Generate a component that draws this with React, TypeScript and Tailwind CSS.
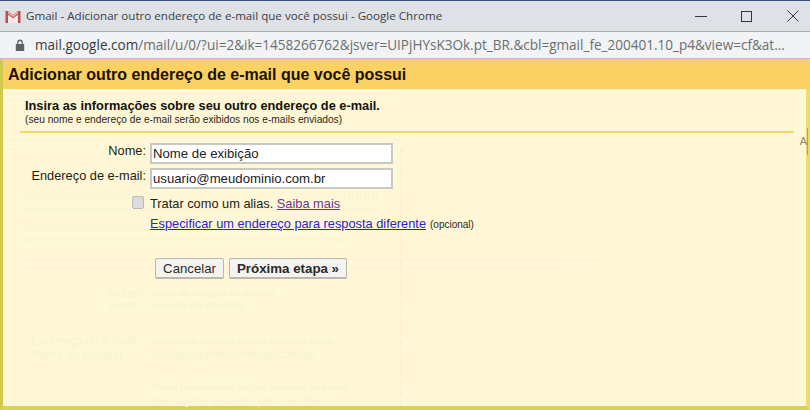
const sans = "font-['Liberation_Sans',Arial,sans-serif]"

function GmailIcon() {
  return (
    <svg width="16" height="13" viewBox="0 0 16 13">
      <path d="M0.5 1 H3 L8 5 L13 1 H15.5 V13 H12.8 V5 L8 8.6 L3.2 5 V13 H0.5 Z" fill="#b9504a" />
      <path d="M3 1 L8 5 L13 1 V3.4 L8 7.2 L3 3.4 Z" fill="#e0b0a8" />
      <path d="M3.2 5 L8 8.6 L12.8 5 V13 H3.2 Z" fill="#f7e9ea" />
    </svg>
  )
}

type GhostRow = { x: number; y: number; text: string; size?: number }

// texto apagado da pagina de tras, coordenadas relativas ao painel
const ghosts: GhostRow[] = [
  { x: 105, y: 198, text: "Nome:", size: 12 },
  { x: 148, y: 199, text: "Nome de exibição do usuário", size: 9.5 },
  { x: 105, y: 211, text: "E-mail:", size: 9.5 },
  { x: 148, y: 211, text: "usuario do domínio", size: 11 },
  { x: 28, y: 246, text: "Endereço de e-mail", size: 12 },
  { x: 148, y: 247, text: "Enviar pelo servidor do seu provedor agora", size: 9.5 },
  { x: 28, y: 260, text: "Nome de usuário", size: 12 },
  { x: 148, y: 260, text: "usuario@meudominio.com.br", size: 12.5 },
  { x: 148, y: 293, text: "Enviar pelo servidor do seu provedor de e-mail", size: 9.5 },
  { x: 148, y: 307, text: "mensagens enviadas pelo servidor", size: 11 },
]

// faixas pontilhadas para o que fica atras do formulario
const strips = [
  { x: 4, y: 4, w: 380, h: 8 },
  { x: 4, y: 50, w: 100, h: 11 },
  { x: 392, y: 50, w: 10, h: 11 },
  { x: 21, y: 105, w: 105, h: 5 },
  { x: 340, y: 105, w: 35, h: 5 },
  { x: 21, y: 118, w: 355, h: 5 },
  { x: 21, y: 136, w: 125, h: 5 },
  { x: 21, y: 149, w: 320, h: 5 },
]

export default function App() {
  return (
    <div className={`w-[810px] h-[410px] overflow-hidden flex flex-col bg-[#fff7d6] ${sans}`}>
      {/* janela do chrome */}
      <div className="h-[32px] shrink-0 flex items-center bg-[#dee1e6] border-t-[1px] border-t-[#34557c] border-b border-b-[#a9abae] pl-[5px]">
        <GmailIcon />
        <span className="ml-[5px] text-[11.6px] text-[#3c3f43] font-['Open_Sans',sans-serif] whitespace-nowrap">
          Gmail - Adicionar outro endereço de e-mail que você possui - Google Chrome
        </span>
        <div className="ml-auto flex items-center text-[#33363a]">
          <div className="w-[12px] h-px bg-[#33363a] mr-[34px]" />
          <div className="w-[11px] h-[11px] border border-[#33363a] mr-[35px]" />
          <svg width="12" height="12" viewBox="0 0 12 12" className="mr-[11px]">
            <path d="M0.5 0.5 L11.5 11.5 M11.5 0.5 L0.5 11.5" stroke="#33363a" strokeWidth="1" />
          </svg>
        </div>
      </div>
      <div className="h-[27px] shrink-0 flex items-center bg-[#f1f3f4] border-b border-b-[#eaa9c8] pl-[15px]">
        <svg width="10" height="12" viewBox="0 0 10 12">
          <path d="M2.2 5 V3.4 a2.8 2.8 0 0 1 5.6 0 V5 H9.2 V12 H0.8 V5 Z M3.5 5 H6.5 V3.4 a1.5 1.5 0 0 0 -3 0 Z" fill="#5f6368" fillRule="evenodd" />
        </svg>
        <span className="ml-[10px] text-[13.55px] text-[#6b6e72] font-['Open_Sans',sans-serif] whitespace-nowrap">
          <span className="text-[#3a3c40]">mail.google.com</span>/mail/u/0/?ui=2&amp;ik=1458266762&amp;jsver=UIPjHYsK3Ok.pt_BR.&amp;cbl=gmail_fe_200401.10_p4&amp;view=cf&amp;at...
        </span>
      </div>

      {/* dialogo */}
      <div className="flex-1 min-h-0 flex flex-col border-l-[3px] border-l-[#d3c94f] border-r-[4px] border-r-[#f0dc6c] border-b-[4px] border-b-[#d8d24f] border-t border-t-[#e9d35c]">
        <div className="h-[29px] shrink-0 bg-[#fad163] flex items-center pl-[5px] text-[16px] font-bold text-[#201000] -mr-[4px]">
          Adicionar outro endereço de e-mail que você possui
        </div>
        <div className="relative flex-1 min-h-0 bg-[#fff7d6] pl-[22px] pr-[12px]">
          {strips.map((s, i) => (
            <div
              key={i}
              className="absolute border-y-2 border-dotted border-[#f9f3d6]"
              style={{ left: s.x, top: s.y, width: s.w, height: s.h }}
            />
          ))}
          {ghosts.map((g, i) => (
            <span
              key={i}
              className="absolute whitespace-nowrap leading-none text-[#f9f2d3]"
              style={{ left: g.x, top: g.y, fontSize: g.size ?? 10 }}
            >
              {g.text}
            </span>
          ))}
          <div className="absolute left-[397px] top-[60px] bottom-0 border-l-2 border-dashed border-[#fdeedd]" />
          <div className="absolute left-[14px] right-[200px] top-[170px] h-px bg-[#fbf1d4]" />
          <div className="absolute left-[14px] right-[240px] top-[178px] h-px bg-[#fbf1d4]" />
          <div className="relative pt-[9px]">
            <p className="text-[12.8px] leading-[15px] font-bold text-[#14120a]">Insira as informações sobre seu outro endereço de e-mail.</p>
            <p className="text-[10.2px] leading-[12px] text-[#2a2618] mt-[1px] whitespace-nowrap">(seu nome e endereço de e-mail serão exibidos nos e-mails enviados)</p>
            <div className="h-[2px] bg-[#eedb68] mt-[5px] -ml-[5px]" />
          </div>
          <div className="relative mt-[10px] -ml-[22px] grid grid-cols-[143px_1fr] gap-x-[4px] text-[12.8px] text-[#1f1d14]">
            <label className="text-right leading-[15px] whitespace-nowrap">Nome:</label>
            <input readOnly value="Nome de exibição" className="w-[243px] h-[21px] border-2 border-[#c9c9c4] bg-white px-[1px] text-[13.2px] text-[#222] outline-none" />
            <label className="text-right mt-[4px] leading-[15px] whitespace-nowrap">Endereço de e-mail:</label>
            <input readOnly value="usuario@meudominio.com.br" className="mt-[4px] w-[243px] h-[21px] border-2 border-[#c9c9c4] bg-white px-[1px] text-[13.2px] text-[#222] outline-none" />
            <div className="flex justify-end items-start pr-[2px] pt-[7px]">
              <div className="w-[12px] h-[13px] rounded-[2px] border border-[#b9b9b9] bg-[#dcdcdc]" />
            </div>
            <div className="mt-[7px] leading-[15px]">
              Tratar como um alias. <a className="text-[#6a3a90] underline">Saiba mais</a>
            </div>
            <div />
            <div className="mt-[5px] leading-[15px] whitespace-nowrap">
              <a className="text-[#2a25c4] underline">Especificar um endereço para resposta diferente</a>
              <span className="ml-[4px] text-[10px] text-[#2a2618]">(opcional)</span>
            </div>
            <div />
            <div className="mt-[26px] ml-[5px] flex gap-[5px]">
              <button className="w-[69px] h-[21px] rounded-[2px] border border-[#b9b9b2] border-b-[2px] bg-[#f4f3ee] text-[13.2px] text-[#2a2a2a]">Cancelar</button>
              <button className="w-[118px] h-[21px] rounded-[2px] border border-[#b9b9b2] border-b-[2px] bg-[#f4f3ee] text-[13.3px] font-bold text-[#2a2a2a]">Próxima etapa »</button>
            </div>
          </div>
          <span className="absolute right-[-1px] top-[47px] text-[11px] leading-none text-[#8a8668]">A</span>
          <div className="absolute right-[-4px] top-[39px] w-[3px] h-[27px] border-l border-[#a8a47a]" />
        </div>
      </div>
    </div>
  )
}
